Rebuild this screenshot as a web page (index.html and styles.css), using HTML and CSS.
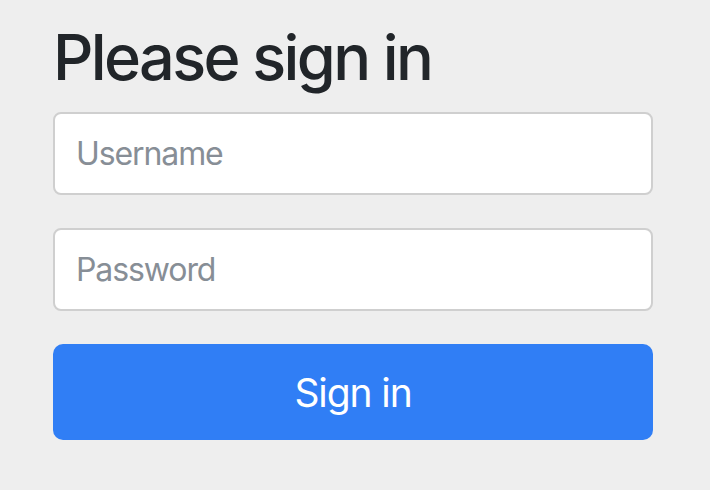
FILE: index.html
```html
<!DOCTYPE html>
<html lang="en">
<head>
<meta charset="utf-8">
<title>Please sign in</title>
<link rel="stylesheet" href="styles.css">
</head>
<body>
<form class="login-form">
  <h2 class="login-title">Please sign in</h2>
  <input class="field" type="text" name="username" placeholder="Username">
  <input class="field" type="password" name="password" placeholder="Password">
  <button class="submit" type="submit">Sign in</button>
</form>
</body>
</html>
```
FILE: styles.css
```css
html, body {
  margin: 0;
  padding: 0;
  background: #eeeeee;
  font-family: Inter, "Liberation Sans", sans-serif;
}
.login-form {
  width: 600px;
  margin: 0;
  padding: 19px 0 0 53px;
  display: flex;
  flex-direction: column;
  gap: 33px;
}
.login-title {
  margin: 0 0 -17px 0;
  font-size: 63px;
  line-height: 77px;
  font-weight: 500;
  color: #212529;
  letter-spacing: -2.6px;
}
.field {
  display: block;
  box-sizing: border-box;
  width: 600px;
  height: 83px;
  margin: 0;
  padding: 0 21px;
  font-family: inherit;
  font-size: 32px;
  letter-spacing: -1.1px;
  color: #495057;
  background: #ffffff;
  border: 2px solid #cfcfcf;
  border-radius: 8px;
  outline: none;
}
.field::placeholder {
  color: #878e96;
  opacity: 1;
}
.submit {
  display: block;
  box-sizing: border-box;
  width: 600px;
  height: 96px;
  margin: 0;
  padding: 0;
  font-family: inherit;
  font-size: 39px;
  letter-spacing: -1.1px;
  color: #ffffff;
  background: #307ef5;
  border: none;
  border-radius: 10px;
}
```
